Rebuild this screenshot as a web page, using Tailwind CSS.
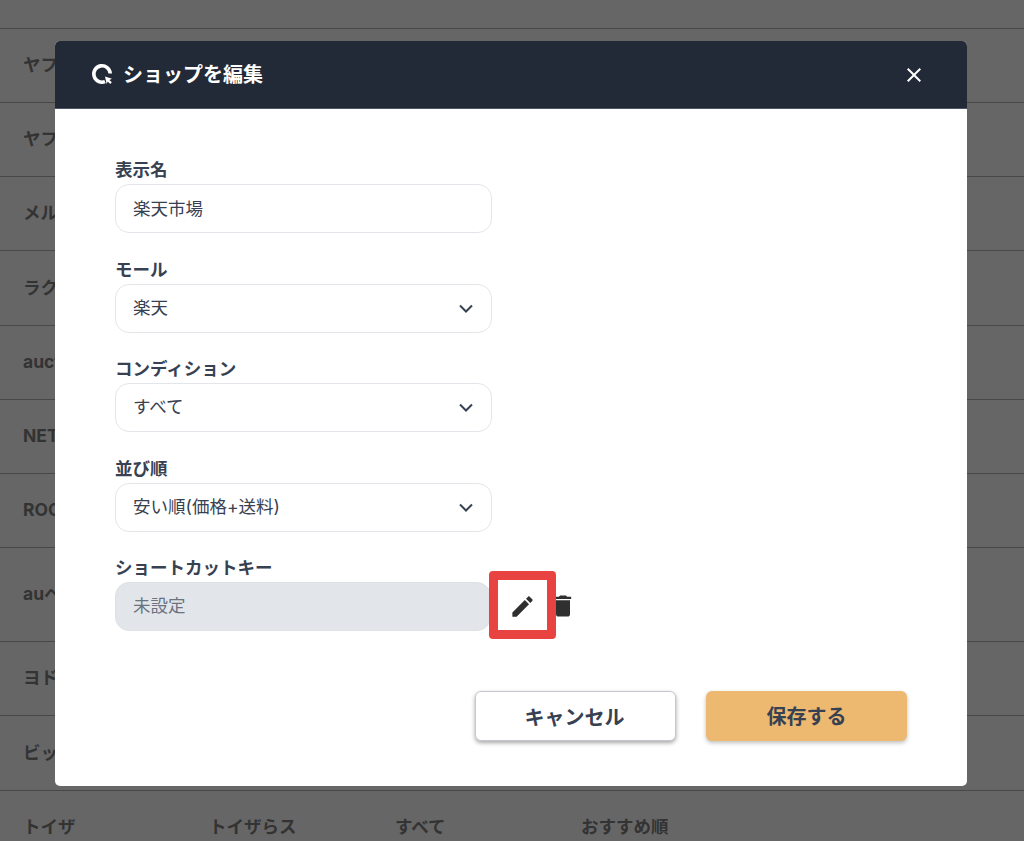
<!DOCTYPE html>
<html lang="ja">
<head>
    <meta charset="UTF-8">
    <meta name="viewport" content="width=device-width, initial-scale=1.0">
    <title>ショップを編集</title>
    <script src="https://cdn.jsdelivr.net/npm/@tailwindcss/browser@4"></script>
</head>
<body class="relative h-[841px] overflow-hidden bg-[#666666] font-['Inter','Noto_Sans_CJK_JP',sans-serif] text-[#374151]">
    <!-- shop table behind the dialog -->
    <div class="-mt-[46px] text-[17.5px] font-bold text-[#333333]">
        <div class="grid h-[75px] grid-cols-[186px_186px_186px_1fr] items-center border-b border-[#484848] pl-[23px]">
            <div>楽天</div><div>楽天</div><div>すべて</div><div>安い順(価格+送料)</div>
        </div>
        <div class="flex h-[74px] items-center border-b border-[#484848] pl-[23px]">ヤフオク</div>
        <div class="flex h-[74px] items-center border-b border-[#484848] pl-[23px]">ヤフショ</div>
        <div class="flex h-[74px] items-center border-b border-[#484848] pl-[23px]">メルカリ</div>
        <div class="flex h-[75px] items-center border-b border-[#484848] pl-[23px]">ラクマ</div>
        <div class="flex h-[74px] items-center border-b border-[#484848] pl-[23px]">auction</div>
        <div class="flex h-[74px] items-center border-b border-[#484848] pl-[23px]">NETSEA</div>
        <div class="flex h-[74px] items-center border-b border-[#484848] pl-[23px]">ROCKET</div>
        <div class="flex h-[94px] items-center border-b border-[#484848] pl-[23px]">auペイ</div>
        <div class="flex h-[74px] items-center border-b border-[#484848] pl-[23px]">ヨドバシ</div>
        <div class="flex h-[75px] items-center border-b border-[#484848] pl-[23px]">ビックカメラ</div>
        <div class="grid h-[74px] grid-cols-[186px_186px_186px_1fr] items-center pb-[2px] pl-[23px]">
            <div>トイザ</div><div>トイザらス</div><div>すべて</div><div>おすすめ順</div>
        </div>
    </div>

    <!-- dialog -->
    <div class="absolute inset-0 flex items-start justify-center pt-[41px] pr-[2px]">
        <div class="w-[912px] overflow-hidden rounded-[5px] bg-white">
            <div class="flex h-[67.5px] items-center justify-between border-b border-[#4b5563] bg-[#232a37] pt-[2px] pr-[41px] pl-[36px] text-white">
                <div class="flex items-center gap-[11px]">
                    <svg class="-mt-[2px] h-[22px] w-[22px]" viewBox="0 0 22 22" fill="none">
                        <path d="M14 18.600A8.200 8.200 0 1 1 19.200 10.500" stroke="white" stroke-width="3.600"/>
                        <path d="M14 13.500l7 2.200-2.600 1.200 2.400 2.400-1.600 1.600-2.400-2.400-1.200 2.600z" fill="white"/>
                    </svg>
                    <h2 class="-ml-[1px] text-[20px] font-bold">ショップを編集</h2>
                </div>
                <svg class="h-6 w-6" viewBox="0 0 24 24" fill="white"><path d="M19 6.410L17.590 5 12 10.590 6.410 5 5 6.410 10.590 12 5 17.590 6.410 19 12 13.410 17.590 19 19 17.590 13.410 12 19 6.410z"/></svg>
            </div>

            <form class="px-[60px] pt-[50.5px] pb-[45px]">
                <div class="flex flex-col gap-[25.5px]">
                    <div>
                        <label for="display_name" class="block h-[25px] text-[17.5px] leading-[22px] font-bold">表示名</label>
                        <input id="display_name" type="text" value="楽天市場" class="block h-[49px] w-[377px] rounded-[14px] border border-[#e2e6ea] px-[17px] pb-[2px] text-[17.5px] text-[#374151]">
                    </div>
                    <div>
                        <label for="mall" class="block h-[25px] text-[17.5px] leading-[22px] font-bold">モール</label>
                        <div class="relative w-[377px]">
                            <select id="mall" class="block h-[49px] w-full appearance-none rounded-[14px] border border-[#e2e6ea] bg-white px-[17px] text-[17.5px] text-[#374151]"><option>楽天</option></select>
                            <svg class="absolute top-[20px] right-[18px] h-[9px] w-[16px]" viewBox="0 0 16 9" fill="none" stroke="#374151" stroke-width="2"><path d="M2 1.500l6 6 6-6"/></svg>
                        </div>
                    </div>
                    <div>
                        <label for="condition" class="block h-[25px] text-[17.5px] leading-[22px] font-bold">コンディション</label>
                        <div class="relative w-[377px]">
                            <select id="condition" class="block h-[49px] w-full appearance-none rounded-[14px] border border-[#e2e6ea] bg-white px-[17px] text-[17.5px] text-[#374151]"><option>すべて</option></select>
                            <svg class="absolute top-[20px] right-[18px] h-[9px] w-[16px]" viewBox="0 0 16 9" fill="none" stroke="#374151" stroke-width="2"><path d="M2 1.500l6 6 6-6"/></svg>
                        </div>
                    </div>
                    <div>
                        <label for="sort" class="block h-[25px] text-[17.5px] leading-[22px] font-bold">並び順</label>
                        <div class="relative w-[377px]">
                            <select id="sort" class="block h-[49px] w-full appearance-none rounded-[14px] border border-[#e2e6ea] bg-white px-[17px] text-[17.5px] text-[#374151]"><option>安い順(価格+送料)</option></select>
                            <svg class="absolute top-[20px] right-[18px] h-[9px] w-[16px]" viewBox="0 0 16 9" fill="none" stroke="#374151" stroke-width="2"><path d="M2 1.500l6 6 6-6"/></svg>
                        </div>
                    </div>
                    <div>
                        <label for="shortcut" class="block h-[25px] text-[17.5px] leading-[22px] font-bold">ショートカットキー</label>
                        <div class="flex items-center">
                            <input id="shortcut" type="text" value="未設定" disabled class="block h-[49px] w-[376px] rounded-[14px] border border-[#dde1e5] bg-[#e2e6ea] px-[17px] pb-[4px] text-[17.5px] text-[#6b7280] opacity-100">
                            <div class="relative -mt-[11.5px] -mb-[7.5px] -ml-[2px] flex h-[68px] w-[67px] items-center justify-center rounded-[4px] border-[9px] border-[#e84340] bg-white">
                                <svg class="mt-[3px] h-[27px] w-[27px] shrink-0" viewBox="0 0 24 24" fill="#2f2f2f"><path d="M3 17.250V21h3.750L17.810 9.940l-3.750-3.750L3 17.250zM20.710 7.040c.39-.39.39-1.020 0-1.410l-2.340-2.340c-.39-.39-1.020-.39-1.410 0l-1.830 1.830 3.750 3.750 1.830-1.830z"/></svg>
                            </div>
                            <svg class="-mt-[2px] -ml-[7px] h-[28px] w-[28px]" viewBox="0 0 24 24" fill="#2f2f2f"><path d="M6 19c0 1.100.9 2 2 2h8c1.100 0 2-.9 2-2V7H6v12zM19 4h-3.500l-1-1h-5l-1 1H5v2h14V4z"/></svg>
                        </div>
                    </div>
                </div>

                <div class="mt-[60px] flex justify-end gap-[30px]">
                    <button type="button" class="h-[50px] w-[201px] rounded-[6px] border border-[#c4c8ce] bg-white pt-[3px] pr-[2px] text-[20px] font-bold shadow-[0_2px_4px_rgba(0,0,0,0.35)]">キャンセル</button>
                    <button type="button" class="h-[50px] w-[201px] rounded-[6px] bg-[#edb970] pt-[2px] text-[20px] font-bold shadow-[0_2px_4px_rgba(0,0,0,0.25)]">保存する</button>
                </div>
            </form>
        </div>
    </div>
</body>
</html>
